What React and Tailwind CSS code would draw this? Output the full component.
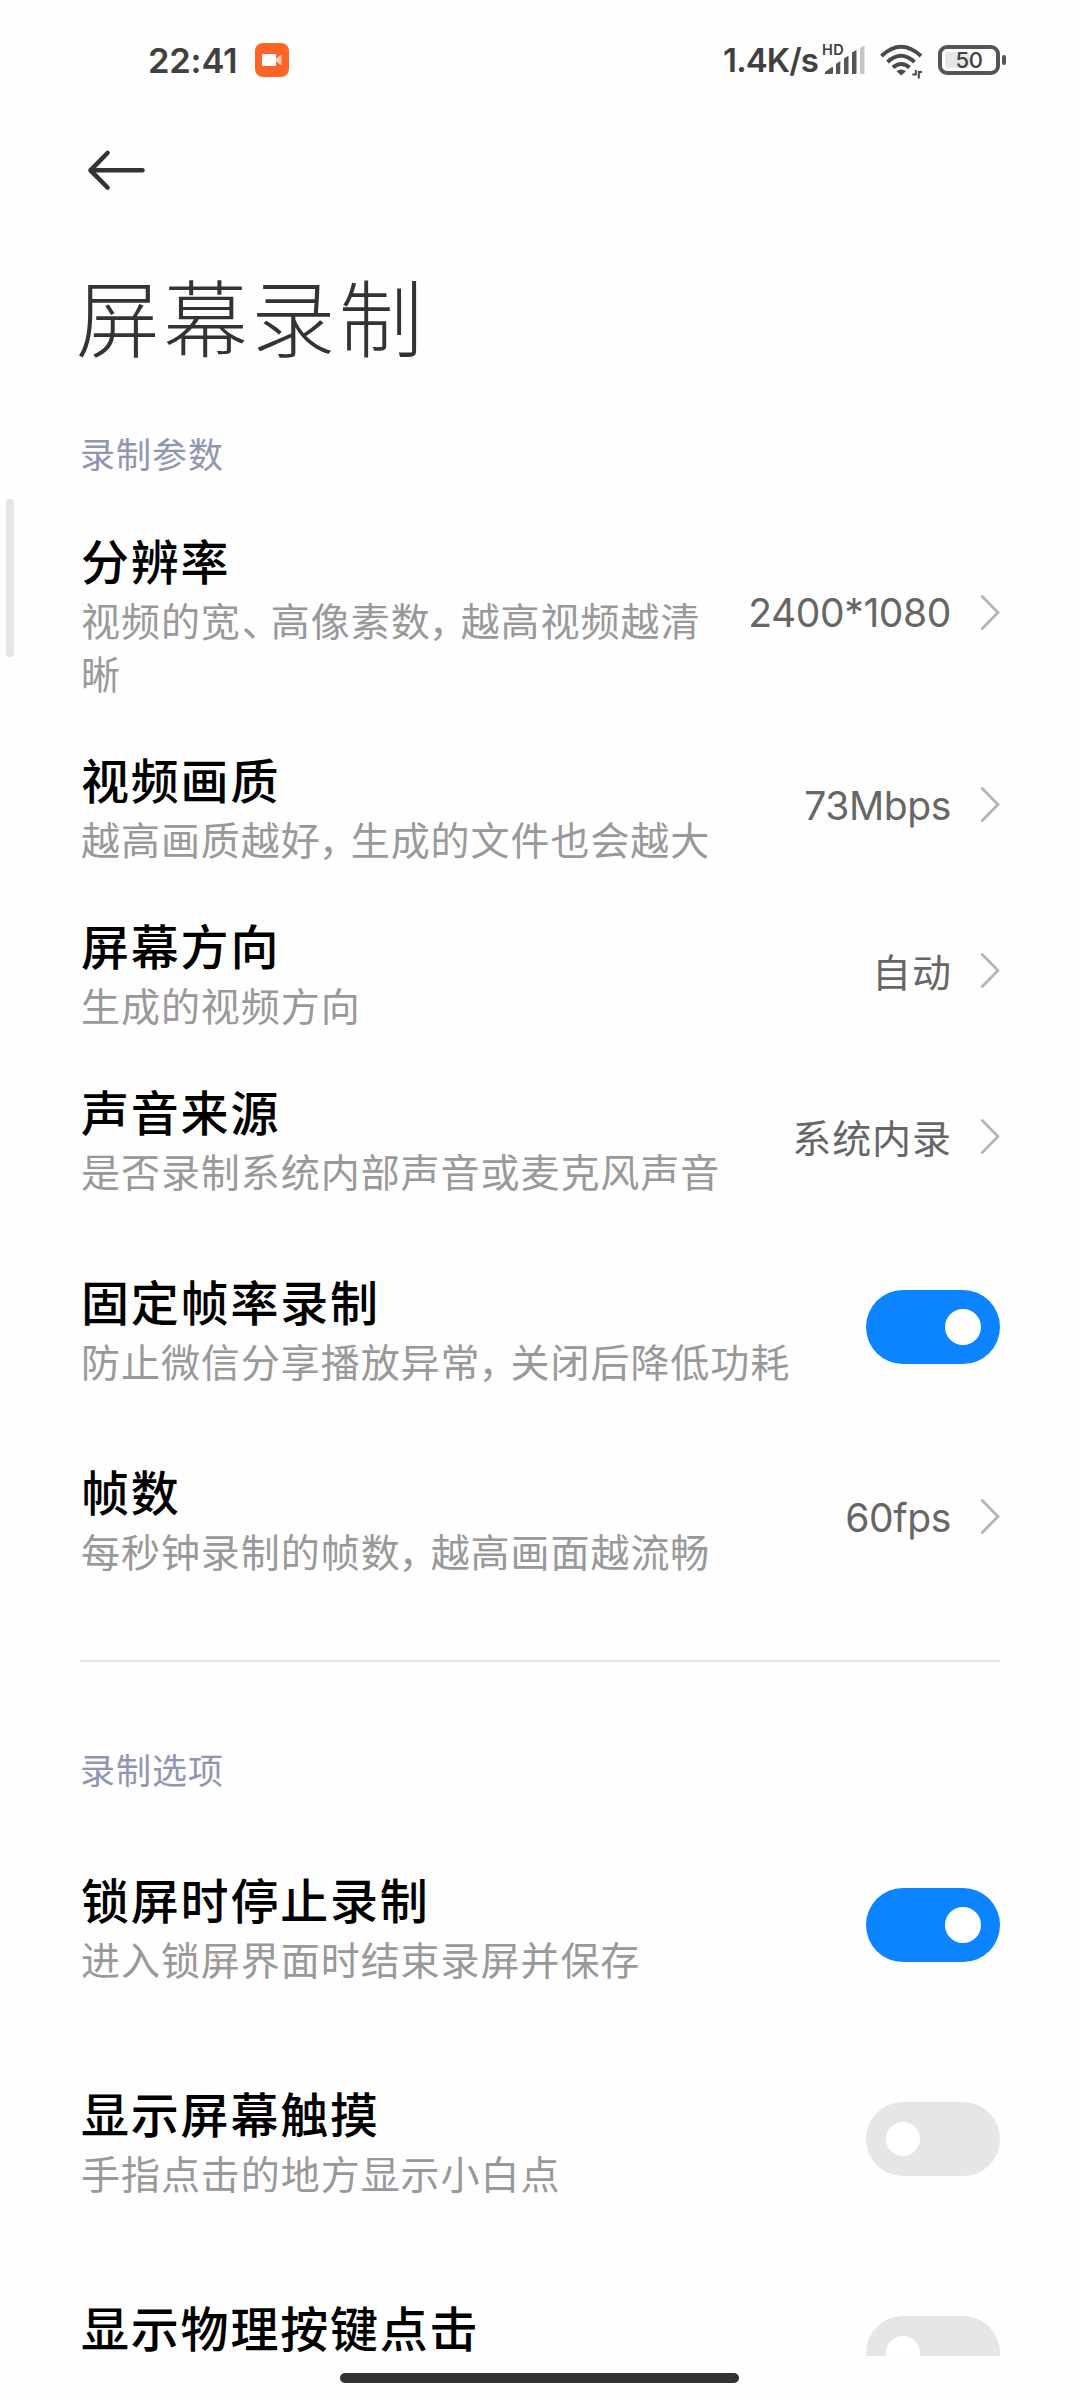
import React from "react";

const recordParams = [
  { title: "分辨率", desc: "视频的宽、高像素数，越高视频越清晰", value: "2400*1080", tall: true },
  { title: "视频画质", desc: "越高画质越好，生成的文件也会越大", value: "73Mbps" },
  { title: "屏幕方向", desc: "生成的视频方向", value: "自动" },
  { title: "声音来源", desc: "是否录制系统内部声音或麦克风声音", value: "系统内录" },
  { title: "固定帧率录制", desc: "防止微信分享播放异常，关闭后降低功耗", on: true },
  { title: "帧数", desc: "每秒钟录制的帧数，越高画面越流畅", value: "60fps" },
];

const recordOptions = [
  { title: "锁屏时停止录制", desc: "进入锁屏界面时结束录屏并保存", on: true },
  { title: "显示屏幕触摸", desc: "手指点击的地方显示小白点", on: false },
  { title: "显示物理按键点击", desc: "", on: false },
];

// Punctuation takes less than a full cell in the description text
const Desc = ({ text }) => (
  <p className="min-h-[53px] text-[39px] leading-[53px] tracking-[0.95px] text-[#999]">
    {text.split(/([，、])/).map((part, i) =>
      part === "，" || part === "、" ? (
        <span key={i} className={part === "，" ? "-ml-[2px] tracking-[-7px]" : "ml-[1px] tracking-[-10px]"}>
          {part}
        </span>
      ) : (
        part
      )
    )}
  </p>
);

const Chevron = () => (
  <svg className="w-[20px] h-[36px] ml-[29px] shrink-0" viewBox="0 0 20 36" fill="none">
    <path d="M2.3 1.6 L18 17.5 L2.3 33.4" stroke="#b5b5b5" strokeWidth="2.8" strokeLinecap="round" strokeLinejoin="round" />
  </svg>
);

const Toggle = ({ on }) =>
  on ? (
    <div className="w-[134px] h-[74px] rounded-full bg-[#0d84ff] flex items-center justify-end pr-[19px] shrink-0">
      <div className="w-[36px] h-[36px] rounded-full bg-white" />
    </div>
  ) : (
    <div className="w-[134px] h-[74px] rounded-full bg-[#e6e6e6] flex items-center pl-[20px] shrink-0">
      <div className="w-[34px] h-[34px] rounded-full bg-white" />
    </div>
  );

const Value = ({ text }) =>
  /^[\x20-\x7e]+$/.test(text) ? (
    <span className="pt-[2px] text-[39px] tracking-[-0.4px] text-[#666] shrink-0 font-[Inter,sans-serif]">{text}</span>
  ) : (
    <span className="pb-[3px] -mr-[1px] text-[39px] leading-[56px] tracking-[0.95px] text-[#666] shrink-0">{text}</span>
  );

const Row = ({ item }) => {
  const isToggle = item.on !== undefined;
  const height = isToggle ? "h-[214px]" : item.tall ? "h-[219px]" : "h-[166px]";
  return (
    <div className={`flex items-center shrink-0 ${height}`}>
      <div className="flex-1 min-w-0 pl-[1px] pb-[2px] mr-[20px]">
        <h3 className="my-[5px] text-[48px] leading-[58px] tracking-[1.8px] font-medium text-black">{item.title}</h3>
        <Desc text={item.desc} />
      </div>
      {isToggle ? (
        <Toggle on={item.on} />
      ) : (
        <>
          <Value text={item.value} />
          <Chevron />
        </>
      )}
    </div>
  );
};

const StatusBar = () => (
  <div className="h-[120px] shrink-0 flex items-center pl-[148px] pr-[74px] text-[#404040] font-[Inter,sans-serif] font-semibold">
    <span className="w-[90px] pt-[1px] text-[34.5px] tracking-[-0.2px] whitespace-nowrap">22:41</span>
    <svg className="w-[34px] h-[34px] ml-[17px]" viewBox="0 0 34 34">
      <rect width="34" height="34" rx="8" fill="#fe6328" />
      <rect x="7" y="11" width="14" height="12" rx="1" fill="#fff" />
      <path d="M21 15.5 L26.5 11.5 V22.5 L21 18.5 Z" fill="#ffc9b4" />
    </svg>
    <span className="text-[33px] pt-[1px] ml-auto tracking-[-0.9px]">1.4K/s</span>
    {/* Mobile signal */}
    <div className="relative w-[42px] h-[30px] ml-[6px]">
      <span className="absolute -left-[2px] -top-[2px] text-[14.5px] leading-[14px] tracking-[0.5px]">HD</span>
      <svg className="w-[42px] h-[30px]" viewBox="0 0 42 30" fill="#555">
        <path d="M1 29 V27 L8 22 Q9 21.5 9 23 V28 Q9 29 8 29 Z" />
        <path d="M12 29 V19 L16.3 16 V28 Q16.3 29 15.3 29 Z" />
        <path d="M20 29 V13.5 L24.5 10.5 V28 Q24.5 29 23.5 29 Z" />
        <path d="M28 29 V7.5 L32.5 5 V28 Q32.5 29 31.5 29 Z" />
        <path d="M36 29 V3 L40.5 0.5 V28 Q40.5 29 39.5 29 Z" fill="#c6c6c6" />
      </svg>
    </div>
    {/* Wifi */}
    <svg className="w-[44px] h-[36px] ml-[14px] mt-[4px]" viewBox="0 0 44 36" fill="none" stroke="#4a4a4a" strokeWidth="4">
      <path d="M1.5 12 Q21 -6.5 41 12" />
      <path d="M7.5 18 Q21 5.5 34.5 18" />
      <path d="M13 23.5 Q21 16.5 29.5 23.5" />
      <path d="M21.2 31.5 L16.5 27.3 Q21 23.5 26 27.3 Z" fill="#4a4a4a" stroke="none" />
      <path d="M32.3 30.5 H35.8 V26 M38.8 34.5 V28 H42" strokeWidth="2" />
    </svg>
    {/* Battery */}
    <div className="flex items-center ml-[14px]">
      <div className="relative w-[62px] h-[30px] rounded-[9px] border-4 border-[#555]">
        <div className="absolute left-[3px] top-[3px] w-[25px] h-[16px] rounded-[3px] bg-[#e6e6e6]" />
        <span className="absolute inset-0 flex items-center justify-center text-[22px] leading-none tracking-[-0.5px] font-medium">50</span>
      </div>
      <div className="w-[4px] h-[10px] ml-[2px] rounded-[2px] bg-[#555]" />
    </div>
  </div>
);

const SectionLabel = ({ children }) => (
  <h2 className="h-[48px] shrink-0 text-[35px] leading-[48px] tracking-[1px] text-[#8f95b5]">{children}</h2>
);

const App = () => (
  <div className="relative w-[1080px] h-[2400px] bg-[#fefefe] overflow-hidden font-['Noto_Sans_CJK_SC',sans-serif]">
    <div className="h-[2356px] overflow-hidden flex flex-col">
      <StatusBar />

      {/* Header */}
      <header className="h-[309px] shrink-0 px-20">
        <svg className="w-[60px] h-[42px] mt-[29px] ml-[7px]" viewBox="0 0 60 42" fill="none" stroke="#333" strokeWidth="4.6" strokeLinecap="round" strokeLinejoin="round">
          <path d="M3.5 21.3 H55.5 M20.5 4 L3.5 21.3 L20.5 38.5" />
        </svg>
        <h1 className="mt-[64px] -ml-[4px] text-[84px] leading-[120px] tracking-[3.6px] font-light text-[#333]">屏幕录制</h1>
      </header>

      <main className="px-20 flex flex-col">
        <SectionLabel>录制参数</SectionLabel>
        <div className="flex flex-col mt-[26px]">
          {recordParams.map((item) => (
            <Row key={item.title} item={item} />
          ))}
        </div>

        <div className="h-[2px] mt-[60px] bg-[#e5e5e5] shrink-0" />

        <div className="mt-[83px] mb-[25px]">
          <SectionLabel>录制选项</SectionLabel>
        </div>
        {recordOptions.map((item) => (
          <Row key={item.title} item={item} />
        ))}
      </main>
    </div>

    {/* Edge handle and home indicator */}
    <div className="absolute left-[6px] top-[499px] w-[8px] h-[158px] rounded-full bg-[#e5e5e5]" />
    <div className="absolute left-[340px] top-[2373px] w-[399px] h-[10px] rounded-full bg-[#333]" />
  </div>
);

export default App;
